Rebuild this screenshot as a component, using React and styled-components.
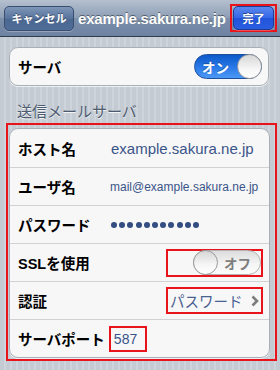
import React from "react";
import styled, { createGlobalStyle } from "styled-components";

const GlobalStyle = createGlobalStyle`
  html, body {
    margin: 0;
    padding: 0;
  }
  body {
    width: 280px;
    height: 370px;
    overflow: hidden;
    font-family: "Liberation Sans", "Noto Sans CJK JP", sans-serif;
  }
`;

const Screen = styled.div`
  width: 280px;
  height: 370px;
  background: repeating-linear-gradient(90deg, #c4cbd3 0px, #c4cbd3 4px, #ced4db 4px, #ced4db 6px);
`;

const NavBar = styled.div`
  height: 37px;
  display: flex;
  align-items: center;
  padding-left: 4px;
  box-sizing: border-box;
  background: linear-gradient(#b5c0cf, #8c9db5 50%, #7c8fab 51%, #6d83a2);
  border-bottom: 1px solid #2f3b4e;
`;

const NavButton = styled.div`
  display: flex;
  align-items: center;
  justify-content: center;
  box-sizing: border-box;
  width: ${({ $w }) => $w}px;
  height: ${({ $h }) => $h}px;
  border-radius: 5px;
  border: 1px solid ${({ $done }) => ($done ? "#1d3a95" : "#3a4f70")};
  background: ${({ $done }) =>
    $done
      ? "linear-gradient(#5a88ee, #3366e6 50%, #2154da 51%, #2a5de0)"
      : "linear-gradient(#7d96b8, #58739c 50%, #4a6892 51%, #4f6d97)"};
  color: #fff;
  font-size: 11px;
  font-weight: bold;
  text-shadow: 0 -1px 0 rgba(0, 0, 0, 0.4);
  box-shadow: 0 1px 0 rgba(255, 255, 255, 0.25);
`;

const Title = styled.div`
  margin-left: 4px;
  color: #fff;
  font-size: 15px;
  font-weight: bold;
  letter-spacing: -0.2px;
  text-shadow: 0 -1px 0 rgba(0, 0, 0, 0.45);
`;

const Mark = styled.div`
  display: flex;
  align-items: center;
  justify-content: ${({ $justify }) => $justify || "flex-start"};
  box-sizing: border-box;
  border: 2px solid #e8131b;
  width: ${({ $w }) => ($w ? `${$w}px` : "auto")};
  height: ${({ $h }) => ($h ? `${$h}px` : "auto")};
  padding: ${({ $pad }) => $pad || "0"};
  margin-left: ${({ $ml }) => $ml || 0}px;
`;

const DoneMark = styled(Mark)`
  margin-left: auto;
  margin-right: 3px;
`;

const Content = styled.div`
  padding-top: 10px;
`;

const Card = styled.div`
  width: 261px;
  box-sizing: border-box;
  background: #f7f7f7;
  border: 1px solid #a9afb7;
  border-radius: 9px;
  box-shadow: 0 1px 0 rgba(255, 255, 255, 0.7);
  overflow: hidden;
`;

const ServerCard = styled(Card)`
  margin-left: 9px;
  width: 260px;
`;

const Row = styled.div`
  height: ${({ $h }) => $h || 38}px;
  box-sizing: border-box;
  display: flex;
  align-items: center;
  padding: 0 6px 0 8px;
  border-top: ${({ $first }) => ($first ? "none" : "1px solid #d2d2d4")};
`;

const Label = styled.div`
  width: ${({ $w }) => ($w ? `${$w}px` : "auto")};
  flex-shrink: 0;
  font-size: 14.5px;
  font-weight: bold;
  color: #000;
`;

const Value = styled.div`
  color: #3a5489;
  font-size: ${({ $size }) => $size || 15}px;
  white-space: nowrap;
`;

const Dots = styled.div`
  display: flex;
  gap: 2.2px;
`;

const Dot = styled.span`
  width: 6px;
  height: 6px;
  border-radius: 50%;
  background: #344c80;
`;

const Spacer = styled.div`
  flex: 1;
`;

const SectionHeader = styled.div`
  margin: 17px 0 0 17px;
  height: 18px;
  line-height: 18px;
  color: #4d5a6f;
  font-size: 15px;
  text-shadow: 0 1px 0 rgba(255, 255, 255, 0.8);
`;

const Outline = styled.div`
  margin: 2px 3px 0 6px;
  border: 2px solid #e8131b;
  padding: 3px 5px 1px 1px;
`;

const Toggle = styled.div`
  position: relative;
  width: 68px;
  height: 25px;
  box-sizing: border-box;
  border-radius: 13px;
  border: 1px solid ${({ $on }) => ($on ? "#1c4f9c" : "#b3b3b3")};
  background: ${({ $on }) =>
    $on ? "linear-gradient(#0c58c9, #2a7ae8 55%, #4d98f5)" : "linear-gradient(#dcdcdc, #f4f4f4 55%, #fdfdfd)"};
  display: flex;
  align-items: center;
  justify-content: ${({ $on }) => ($on ? "flex-start" : "flex-end")};
  padding: ${({ $on }) => ($on ? "0 0 0 7px" : "0 9px 0 0")};
  font-size: 13.5px;
  font-weight: bold;
  color: ${({ $on }) => ($on ? "#fff" : "#7e7e7e")};
  text-shadow: ${({ $on }) => ($on ? "0 -1px 0 rgba(0,0,0,0.3)" : "none")};
`;

const Knob = styled.div`
  position: absolute;
  top: -1px;
  ${({ $on }) => ($on ? "right: -1px;" : "left: -1px;")}
  width: 25px;
  height: 25px;
  box-sizing: border-box;
  border-radius: 50%;
  border: 1px solid #9a9a9a;
  background: linear-gradient(#d6d6d6, #f6f6f6 60%, #ffffff);
`;

const AuthValue = styled.div`
  color: #4a5f92;
  font-size: 14.5px;
`;

const Chevron = () => (
  <svg width="8" height="12" viewBox="0 0 8 12">
    <polyline points="1.5,1.5 6,6 1.5,10.5" fill="none" stroke="#7d7d7d" strokeWidth="2.6" />
  </svg>
);

export default function App() {
  return (
    <>
      <GlobalStyle />
      <Screen>
        <NavBar>
          <NavButton $w={70} $h={25}>キャンセル</NavButton>
          <Title>example.sakura.ne.jp</Title>
          <DoneMark $pad="0 1px">
            <NavButton $done $w={41} $h={24}>完了</NavButton>
          </DoneMark>
        </NavBar>
        <Content>
          <ServerCard>
            <Row $first $h={37}>
              <Label>サーバ</Label>
              <Spacer />
              <Toggle $on>
                オン
                <Knob $on />
              </Toggle>
            </Row>
          </ServerCard>
          <SectionHeader>送信メールサーバ</SectionHeader>
          <Outline>
            <Card>
              <Row $first>
                <Label $w={93}>ホスト名</Label>
                <Value>example.sakura.ne.jp</Value>
              </Row>
              <Row>
                <Label $w={92}>ユーザ名</Label>
                <Value $size={12}>mail@example.sakura.ne.jp</Value>
              </Row>
              <Row>
                <Label $w={93}>パスワード</Label>
                <Dots>
                  {Array.from({ length: 11 }).map((_, i) => (
                    <Dot key={i} />
                  ))}
                </Dots>
              </Row>
              <Row>
                <Label>SSLを使用</Label>
                <Spacer />
                <Mark $w={97} $h={28} $justify="flex-end">
                  <Toggle>
                    オフ
                    <Knob />
                  </Toggle>
                </Mark>
              </Row>
              <Row>
                <Label>認証</Label>
                <Spacer />
                <Mark $w={97} $h={27} $justify="space-between" $pad="0 2px 0 2px">
                  <AuthValue>パスワード</AuthValue>
                  <Chevron />
                </Mark>
              </Row>
              <Row>
                <Label>サーバポート</Label>
                <Mark $w={38} $h={26} $pad="0 0 0 3px" $ml={4}>
                  <Value $size={14}>587</Value>
                </Mark>
              </Row>
            </Card>
          </Outline>
        </Content>
      </Screen>
    </>
  );
}
